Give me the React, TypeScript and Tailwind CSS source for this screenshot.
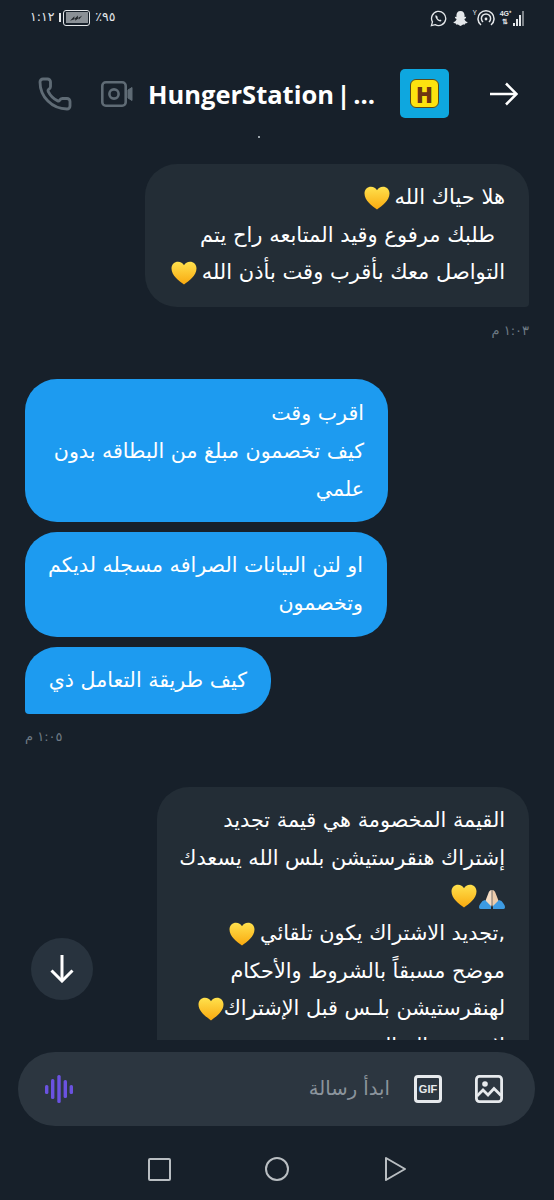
import { Phone } from "lucide-react"

const arabic = { fontFamily: '"DejaVu Sans", sans-serif' }

function Heart({ className = "" }: { className?: string }) {
  return (
    <svg viewBox="0 0 26 24" className={`inline-block w-[26px] h-[24px] shrink-0 ${className}`}>
      <defs>
        <linearGradient id="heartFill" x1="0" y1="0" x2="0" y2="1">
          <stop offset="0" stopColor="#ffe14d" />
          <stop offset="1" stopColor="#f9a90f" />
        </linearGradient>
      </defs>
      <path
        d="M13 23.500C8 19.600 .5 14.400 .5 7.400 .5 3.400 3.500.8 7 .8c2.700 0 4.800 1.300 6 3.400C14.200 2.100 16.300.8 19 .8c3.500 0 6.500 2.600 6.500 6.600 0 7-7.500 12.200-12.500 16.100z"
        fill="url(#heartFill)"
      />
    </svg>
  )
}

function Pray() {
  return (
    <svg viewBox="0 0 26 19" className="inline-block w-[26px] h-[19px] shrink-0 mt-[8px]">
      <path d="M12.700 0C11 0 10 1.500 9.300 3.500L6 12l6 5 .7-2z" fill="#f6dcc3" />
      <path d="M13.300 0C15 0 16 1.500 16.700 3.500L20 12l-6 5-.7-2z" fill="#eccbab" />
      <path d="M0 17c0-2 2-4 3.500-6L6 10l6 6v3H1.500C.5 19 0 18 0 17zM26 17c0-2-2-4-3.500-6L20 10l-6 6v3h10.500c1 0 1.500-1 1.500-2z" fill="#3d9be3" />
    </svg>
  )
}

function Line({ children }: { children: React.ReactNode }) {
  return <div className="flex items-center h-[37.6px] whitespace-nowrap gap-[5px]">{children}</div>
}

function StatusBar() {
  return (
    <div className="h-[36px] flex items-center justify-between pl-[30px] pr-[30px] text-[#e4e7ea]">
      <div className="flex items-center gap-[5px] text-[12.500px] mt-[-1px]" style={arabic}>
        <span>١:١٢</span>
        <span className="flex items-center gap-[2px]">
          <span className="w-[2px] h-[9px] bg-[#e4e7ea]" />
          <span className="w-[27px] h-[16px] border-[1.500px] border-[#e4e7ea] rounded-[3px] p-[1.500px]">
            <span className="flex items-center justify-center w-full h-full bg-[#8a9096]">
              <svg viewBox="0 0 16 6" className="w-[14px] h-[6px]">
                <path d="M0 6 5 1v3l4-4v3l5-3-4 5V3L6 6V4z" fill="#22262b" />
              </svg>
            </span>
          </span>
        </span>
        <span>٪٩٥</span>
      </div>
      <div className="flex items-center">
        {/* whatsapp */}
        <svg viewBox="0 0 18 18" className="w-[17px] h-[17px]" fill="none" stroke="#e4e7ea" strokeWidth="1.400">
          <path d="M1.500 16.500 2.600 12.600A7.500 7.500 0 1 1 5.500 15.500z" />
          <path d="M6.200 5.400c-1 1-.5 3 1.300 4.900 1.800 1.800 3.700 2.300 4.800 1.200l-1.500-1.500-1 .5c-.8-.4-1.600-1.200-2-2l.5-1z" fill="#e4e7ea" stroke="none" />
        </svg>
        {/* snapchat */}
        <svg viewBox="0 0 18 18" className="w-[17px] h-[17px] ml-[5px]">
          <path d="M9 1c2.800 0 4.300 2.100 4.300 4.500v2l1.700-.3-.4 1.500-1.500.7c.4 1.500 1.600 2.700 3.400 3.400l-.5 1-2 .5-.5 1.200c-1.700-.4-2.700.2-4.500 1.500-1.800-1.300-2.800-1.900-4.500-1.500L4 14.300l-2-.5-.5-1c1.800-.7 3-1.900 3.400-3.400l-1.500-.7L3 7.200l1.700.3v-2C4.700 3.100 6.200 1 9 1z" fill="#e4e7ea" />
        </svg>
        <span className="flex items-start ml-[4px]">
          <span className="text-[7px] leading-[7px] text-[#e4e7ea]">Y</span>
          {/* hotspot */}
          <svg viewBox="0 0 18 18" className="w-[18px] h-[18px]" fill="none" stroke="#e4e7ea" strokeWidth="1.500">
            <path d="M4 16A8 8 0 1 1 14 16" />
            <path d="M6 13A4.600 4.600 0 1 1 12 13" />
            <circle cx="9" cy="10" r="1.400" fill="#e4e7ea" stroke="none" />
          </svg>
        </span>
        <span className="flex items-end gap-[1px] ml-[5px]">
          <span className="flex flex-col items-center text-[7px] leading-[8px] font-bold mr-[1px]" style={{ fontFamily: '"Liberation Sans", sans-serif' }}>
            <span>4G⁺</span>
            <span>⇅</span>
          </span>
          <span className="w-[2px] h-[3px] bg-[#e4e7ea]" />
          <span className="w-[2px] h-[7px] bg-[#e4e7ea]" />
          <span className="w-[2px] h-[11px] bg-[#e4e7ea]" />
          <span className="w-[2px] h-[15px] bg-[#7f858b]" />
        </span>
      </div>
    </div>
  )
}

function Header() {
  return (
    <div className="h-[94px] flex items-center pl-[39px] pt-[21px]">
      <Phone className="w-[36px] h-[36px] text-[#5f6b75] -ml-[2px]" strokeWidth={1.900} />
      {/* video camera */}
      <svg viewBox="0 0 32 26" className="w-[32px] h-[26px] ml-[28px]" fill="none" stroke="#5f6b75" strokeWidth="2.600">
        <rect x="1.300" y="1.300" width="23.400" height="23.400" rx="3.500" />
        <circle cx="13" cy="13" r="4.600" />
        <path d="M27 9l4-2.500v13L27 17z" fill="#5f6b75" strokeWidth="1" />
      </svg>
      <div
        className="ml-[15px] w-[252px] text-white text-[25.500px] font-bold whitespace-nowrap [word-spacing:-4px] mt-[2px]"
        style={{ fontFamily: '"Open Sans", sans-serif' }}
      >
        HungerStation | ...
      </div>
      <div className="w-[49px] h-[49px] rounded-[5px] bg-[#0ea7df] flex items-center justify-center">
        <div
          className="w-[29px] h-[29px] rounded-[6px] bg-[#fde30f] border-[1.500px] border-[#5b4a1c] flex items-center justify-center text-[#6f3512] text-[22px] font-black leading-none"
          style={{ fontFamily: '"Open Sans", sans-serif' }}
        >
          H
        </div>
      </div>
      <svg viewBox="0 0 28 24" className="w-[28px] h-[24px] ml-[41px]" fill="none" stroke="#ffffff" strokeWidth="2.500">
        <path d="M0 12H26" />
        <path d="M16 1.500 26.500 12 16 22.500" />
      </svg>
    </div>
  )
}

function Messages() {
  return (
    <div className="relative h-[910px] overflow-hidden px-[25px] pt-[34px]" style={arabic}>
      <span className="absolute left-[258px] top-[6px] w-[2px] h-[2px] bg-[#9aa3aa]" />
      <div className="flex justify-end">
        <div dir="rtl" className="w-[384px] h-[143px] bg-[#232d36] rounded-[32px] rounded-br-[4px] pt-[15px] pr-[24px] text-[21px] text-white">
          <Line>هلا حياك الله <Heart /></Line>
          <Line><span className="mr-[10px]">طلبك مرفوع وقيد المتابعه راح يتم</span></Line>
          <Line>التواصل معك بأقرب وقت بأذن الله <Heart /></Line>
        </div>
      </div>
      <div dir="rtl" className="text-[13px] text-[#6e7a85] mt-[15px] h-[18px] leading-[18px] whitespace-nowrap">١:٠٣ م</div>

      <div className="mt-[39px] flex flex-col items-start gap-[10px]">
        <div dir="rtl" className="w-[363px] h-[143px] bg-[#1d9bf0] rounded-[32px] pt-[16px] pr-[24px] text-[20.600px] text-white">
          <Line>اقرب وقت</Line>
          <Line>كيف تخصمون مبلغ من البطاقه بدون</Line>
          <Line>علمي</Line>
        </div>
        <div dir="rtl" className="w-[362px] h-[105px] bg-[#1d9bf0] rounded-[32px] pt-[15px] pr-[24px] text-[20.600px] text-white">
          <Line>او لتن البيانات الصرافه مسجله لديكم</Line>
          <Line>وتخصمون</Line>
        </div>
        <div dir="rtl" className="w-[246px] h-[67px] bg-[#1d9bf0] rounded-[32px] rounded-bl-[4px] pt-[15px] pr-[24px] text-[20.600px] text-white">
          <Line>كيف طريقة التعامل ذي</Line>
        </div>
      </div>
      <div dir="rtl" className="text-[13px] text-[#6e7a85] mt-[14px] h-[18px] leading-[18px] whitespace-nowrap w-fit">١:٠٥ م</div>

      <div className="mt-[41px] flex justify-end">
        <div dir="rtl" className="w-[372px] h-[300px] bg-[#232d36] rounded-[32px] rounded-br-[4px] pt-[15px] pr-[24px] text-[20.800px] text-white">
          <Line>القيمة المخصومة هي قيمة تجديد</Line>
          <Line>إشتراك هنقرستيشن بلس الله يسعدك</Line>
          <Line><Pray /><Heart className="-mr-[3px]" /></Line>
          <Line>,تجديد الاشتراك يكون تلقائي <Heart /></Line>
          <Line>موضح مسبقاً بالشروط والأحكام</Line>
          <Line>لهنقرستيشن بلـس قبل الإشتراك<Heart className="-mr-[5px]" /></Line>
          <Line>لا يتم رد المبالغ</Line>
        </div>
      </div>

      <button className="absolute left-[31px] top-[808px] w-[62px] h-[62px] rounded-full bg-[#28333e] flex items-center justify-center">
        <svg viewBox="0 0 24 28" className="w-[24px] h-[28px]" fill="none" stroke="#ffffff" strokeWidth="3">
          <path d="M12 0V26" />
          <path d="M1.500 15.500 12 26 22.500 15.500" />
        </svg>
      </button>
    </div>
  )
}

function Composer() {
  return (
    <div className="mx-[18px] mt-[12px] w-[517px] h-[74px] rounded-[37px] bg-[#2c3640] flex items-center pl-[27px] pr-[32px]">
      <svg viewBox="0 0 28 28" className="w-[28px] h-[28px]" fill="#6a52e0">
        <rect x="0" y="10" width="3.400" height="9" rx="1.500" />
        <rect x="6" y="4" width="3.400" height="20" rx="1.500" />
        <rect x="12.300" y="0" width="3.400" height="28" rx="1.500" />
        <rect x="18.600" y="5" width="3.400" height="18" rx="1.500" />
        <rect x="24.600" y="10" width="3.400" height="9" rx="1.500" />
      </svg>
      <div dir="rtl" className="ml-auto text-[19.600px] text-[#8b949c]" style={arabic}>ابدأ رسالة</div>
      <div
        className="ml-[24px] w-[28px] h-[28px] rounded-[4px] border-[3px] border-[#e7eaed] flex items-center justify-center text-[#e7eaed] text-[11px] font-bold"
        style={{ fontFamily: '"Liberation Sans", sans-serif' }}
      >
        GIF
      </div>
      <svg viewBox="0 0 28 28" className="ml-[33px] w-[28px] h-[28px]" fill="none" stroke="#e7eaed" strokeWidth="2.800">
        <rect x="1.400" y="1.400" width="25.200" height="25.200" rx="3" />
        <circle cx="10" cy="9" r="2.800" fill="#e7eaed" stroke="none" />
        <path d="M2 21l6-6 5 5 6-6.500 7 7" />
      </svg>
    </div>
  )
}

function NavBar() {
  return (
    <div className="h-[74px] flex items-center pt-[12px] pl-[148px]">
      <div className="w-[23px] h-[23px] rounded-[2px] border-2 border-[#b9bec2]" />
      <div className="ml-[94px] w-[24px] h-[24px] rounded-full border-2 border-[#b9bec2]" />
      <svg viewBox="0 0 23 26" className="ml-[95px] w-[23px] h-[26px]" fill="none" stroke="#b9bec2" strokeWidth="2" strokeLinejoin="round">
        <path d="M2 2 21 13 2 24z" />
      </svg>
    </div>
  )
}

export default function App() {
  return (
    <div className="w-[554px] h-[1200px] bg-[#17202a] overflow-hidden">
      <StatusBar />
      <Header />
      <Messages />
      <Composer />
      <NavBar />
    </div>
  )
}
